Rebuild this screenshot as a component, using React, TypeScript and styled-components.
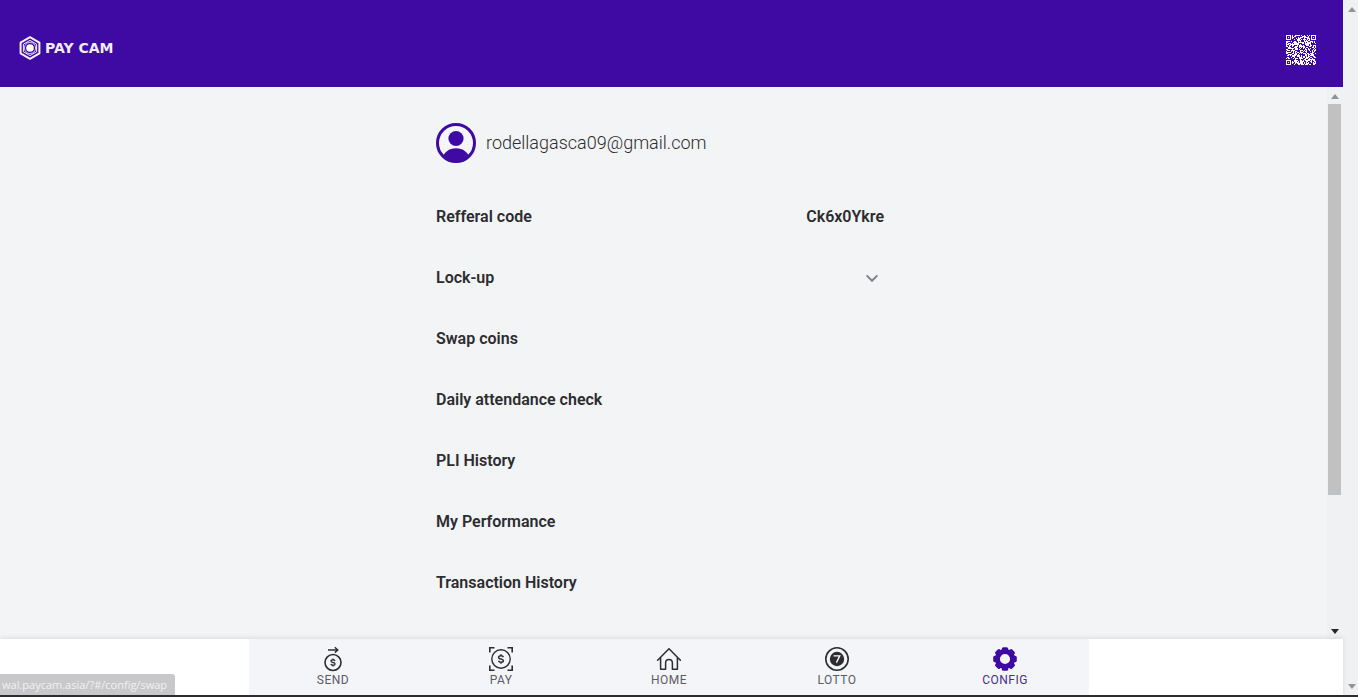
import React from "react";
import styled, { createGlobalStyle } from "styled-components";

const purple = "#3e0aa3";
const ink = "#2c2c31";

const GlobalStyle = createGlobalStyle`
  *, *::before, *::after { box-sizing: border-box; }
  body {
    margin: 0;
    background: #f3f4f6;
    color: ${ink};
    font-family: Roboto, "Liberation Sans", sans-serif;
  }
`;

const Window = styled.div`
  display: flex;
  height: 100vh;
  border-bottom: 2px solid #2e2c30;
  overflow: hidden;
`;

const Page = styled.div`
  display: flex;
  flex: 1;
  flex-direction: column;
  min-width: 0;
`;

const Header = styled.header`
  display: flex;
  flex: none;
  align-items: center;
  justify-content: space-between;
  height: 87px;
  padding: 8px 27px 0 18px;
  background: ${purple};
`;

const Logo = styled.a`
  display: flex;
  align-items: center;
  gap: 3px;
  color: #f1ecfb;
  font-family: "DejaVu Sans", sans-serif;
  font-size: 14px;
  font-weight: 700;
  line-height: 24px;
  text-decoration: none;
`;

const QrButton = styled.button`
  display: block;
  margin-top: 5px;
  padding: 0;
  border: 0;
  background: none;
  line-height: 0;
`;

const Body = styled.div`
  display: flex;
  flex: 1;
  min-height: 0;
`;

const Main = styled.main`
  flex: 1;
  min-width: 0;
  overflow: hidden;
`;

const Content = styled.div`
  max-width: 455px;
  margin: 0 auto;
  padding-top: 36px;
`;

const Account = styled.div`
  display: flex;
  align-items: center;
  gap: 10px;
  margin-bottom: 23px;
  font-size: 18px;
  font-weight: 300;
  line-height: 24px;
`;

const List = styled.ul`
  margin: 0;
  padding: 0;
  list-style: none;
`;

const Row = styled.li`
  display: flex;
  align-items: center;
  justify-content: space-between;
  height: 61px;
  padding-right: 7px;
  font-size: 16px;
  font-weight: 600;
  line-height: 24px;
`;

const RowLink = styled.a`
  color: inherit;
  text-decoration: none;
`;

const RowToggle = styled.button`
  display: flex;
  flex: 1;
  align-items: center;
  justify-content: space-between;
  padding: 0;
  border: 0;
  background: none;
  color: inherit;
  font: inherit;
`;

const Nav = styled.nav`
  position: relative;
  display: flex;
  flex: none;
  justify-content: center;
  height: 56px;
  padding-right: 5px;
  background: #fff;
  box-shadow: 0 -1px 5px rgba(0, 0, 0, 0.1);
`;

const Tabs = styled.div`
  display: flex;
  width: 100%;
  max-width: 840px;
  background: #f4f5f8;
`;

const Tab = styled.a<{ $active?: boolean }>`
  display: flex;
  flex: 1;
  flex-direction: column;
  align-items: center;
  padding-top: 7px;
  color: ${(p) => (p.$active ? purple : ink)};
  text-decoration: none;
`;

const TabLabel = styled.span<{ $active?: boolean }>`
  color: ${(p) => (p.$active ? "#45308c" : "#5c5b69")};
  font-size: 12px;
  letter-spacing: 0.5px;
  line-height: 16px;
`;

const Track = styled.div<{ $inner?: boolean }>`
  display: flex;
  flex: none;
  flex-direction: column;
  align-items: center;
  justify-content: space-between;
  width: ${(p) => (p.$inner ? 16 : 15)}px;
  padding: ${(p) => (p.$inner ? "7px 0 5px" : "7px 0 6px 3px")};
  background: #f0f1f3;
`;

const ThumbArea = styled.div`
  flex: 1;
  width: 13px;
  margin: 5px 2px 17px 0;
`;

const Thumb = styled.div`
  height: 77%;
  background: #c1c1c2;
`;

const Arrow = styled.span<{ $down?: boolean; $dark?: boolean }>`
  width: 8px;
  height: 5px;
  background: ${(p) => (p.$dark ? "#252528" : "#929295")};
  clip-path: ${(p) =>
    p.$down ? "polygon(0 0, 100% 0, 50% 100%)" : "polygon(50% 0, 100% 100%, 0 100%)"};
`;

const StatusBubble = styled.div`
  position: fixed;
  bottom: 2px;
  left: 0;
  height: 21px;
  padding: 0 8px 0 2px;
  border-top-right-radius: 3px;
  background: #c8c8ca;
  color: #f1f1f2;
  font-family: "Open Sans", sans-serif;
  font-size: 11px;
  line-height: 21px;
  white-space: nowrap;
`;

const QR_SIZE = 30;

function qrModules(): string {
  let seed = 20117;
  let d = "";
  for (let y = 0; y < QR_SIZE; y++) {
    for (let x = 0; x < QR_SIZE; x++) {
      seed = (seed * 1103515245 + 12345) % 2147483648;
      const nearTop = y < 6;
      const nearLeft = x < 6;
      const nearRight = x > QR_SIZE - 7;
      const nearBottom = y > QR_SIZE - 7;
      if ((nearTop && (nearLeft || nearRight)) || (nearBottom && nearLeft)) continue;
      if ((seed >> 12) % 100 < 56) d += `M${x} ${y}h1v1h-1z`;
    }
  }
  return d;
}

function QrCode() {
  return (
    <svg width="30" height="30" viewBox="0 0 30 30" fill="#fff" shapeRendering="crispEdges" aria-hidden="true">
      <path d={qrModules()} />
      {[[0, 0], [25, 0], [0, 25]].map(([x, y]) => (
        <g key={`${x}-${y}`}>
          <rect x={x + 0.5} y={y + 0.5} width="4" height="4" fill="none" stroke="#fff" />
          <rect x={x + 2} y={y + 2} width="1" height="1" />
        </g>
      ))}
    </svg>
  );
}

function HexMark() {
  return (
    <svg width="24" height="26" viewBox="0 0 24 26" fill="none" stroke="#f4f0fc" aria-hidden="true">
      <path d="M12 2.2 21.4 7.6V18.4L12 23.8 2.6 18.4V7.6Z" strokeWidth="2" strokeLinejoin="round" />
      <path d="M12 5.4 18.6 9.2V16.8L12 20.6 5.4 16.8V9.2Z" strokeWidth="1" />
      <circle cx="12" cy="13" r="5.6" strokeWidth="0.8" />
      <circle cx="12" cy="13" r="3.8" fill="#fff" stroke="none" />
    </svg>
  );
}

function Avatar() {
  return (
    <svg width="40" height="40" viewBox="0 0 40 40" aria-hidden="true">
      <defs>
        <clipPath id="avatar-clip">
          <circle cx="20" cy="20" r="19" />
        </clipPath>
      </defs>
      <circle cx="20" cy="20" r="18.5" fill="#f5f5fa" stroke={purple} strokeWidth="3" />
      <circle cx="20" cy="15.5" r="7.6" fill={purple} />
      <path d="M5 37C8 29 13 25.2 20 25.2S32 29 35 37L28 41H12Z" fill={purple} clipPath="url(#avatar-clip)" />
    </svg>
  );
}

function Chevron() {
  return (
    <svg width="24" height="24" viewBox="0 0 24 24" fill="none" stroke="#828288" strokeWidth="2" aria-hidden="true">
      <path d="M6.6 9.4 12 14.8 17.4 9.4" />
    </svg>
  );
}

function Dollar({ cx, cy, scale = 1 }: { cx: number; cy: number; scale?: number }) {
  return (
    <path
      transform={`translate(${cx} ${cy}) scale(${scale})`}
      d="M2.4-1.8C2.1-2.8 1.2-3.2 0-3.2-1.4-3.2-2.4-2.6-2.4-1.6-2.4-.5-1.4-.2 0 0 1.4.3 2.4.7 2.4 1.7 2.4 2.7 1.4 3.2 0 3.2-1.3 3.2-2.2 2.7-2.5 1.8M0-4.7V-3.2M0 3.2V4.7"
      strokeWidth="1.5"
    />
  );
}

function TabIcon({ children }: { children: React.ReactNode }) {
  return (
    <svg width="26" height="26" viewBox="0 0 26 26" fill="none" stroke="currentColor" strokeWidth="1.6" aria-hidden="true">
      {children}
    </svg>
  );
}

const tabs = [
  {
    label: "SEND",
    href: "#/send",
    icon: (
      <>
        <path d="M8 4H17.6M14.8 1.2 17.8 4 14.8 6.6" strokeWidth="1.4" />
        <circle cx="13" cy="16.5" r="8" />
        <Dollar cx={13} cy={16.5} scale={0.86} />
      </>
    ),
  },
  {
    label: "PAY",
    href: "#/pay",
    icon: (
      <>
        <path d="M1.8 6.5V1.8H6.5M19.5 1.8H24.2V6.5M24.2 19.5V24.2H19.5M6.5 24.2H1.8V19.5" />
        <circle cx="13" cy="13" r="9.2" strokeWidth="1.4" />
        <Dollar cx={13} cy={13} />
      </>
    ),
  },
  {
    label: "HOME",
    href: "#/home",
    icon: (
      <path
        d="M1.6 14.2 13 2.8 24.4 14.2M4.6 11.6V23.2H9.6V17.2C9.6 12.4 16.4 12.4 16.4 17.2V23.2H21.4V11.6"
        strokeWidth="1.5"
        strokeLinejoin="round"
        strokeLinecap="round"
      />
    ),
  },
  {
    label: "LOTTO",
    href: "#/lotto",
    icon: (
      <>
        <circle cx="13" cy="13" r="11.2" />
        <circle cx="13" cy="13" r="7.2" fill="currentColor" stroke="none" />
        <path d="M10.2 10.6V9.8H15.8L12.4 16.6" stroke="#fff" strokeWidth="1.3" />
      </>
    ),
  },
  {
    label: "CONFIG",
    href: "#/config",
    active: true,
    icon: (
      <>
        <circle cx="13" cy="13" r="7.6" strokeWidth="5" />
        {[0, 45, 90, 135, 180, 225, 270, 315].map((angle) => (
          <rect
            key={angle}
            x="9.8"
            y="1.2"
            width="6.4"
            height="5"
            rx="1.6"
            fill="currentColor"
            stroke="none"
            transform={`rotate(${angle} 13 13)`}
          />
        ))}
      </>
    ),
  },
];

const links = [
  { label: "Swap coins", href: "#/config/swap" },
  { label: "Daily attendance check", href: "#/config/attendance" },
  { label: "PLI History", href: "#/config/pli" },
  { label: "My Performance", href: "#/config/performance" },
  { label: "Transaction History", href: "#/config/transactions" },
];

export default function App() {
  return (
    <>
      <GlobalStyle />
      <Window>
        <Page>
          <Header>
            <Logo href="#/home">
              <HexMark />
              PAY CAM
            </Logo>
            <QrButton type="button" aria-label="QR code">
              <QrCode />
            </QrButton>
          </Header>
          <Body>
            <Main>
              <Content>
                <Account>
                  <Avatar />
                  <span>rodellagasca09@gmail.com</span>
                </Account>
                <List>
                  <Row>
                    <span>Refferal code</span>
                    <span>Ck6x0Ykre</span>
                  </Row>
                  <Row>
                    <RowToggle type="button" aria-expanded="false">
                      Lock-up
                      <Chevron />
                    </RowToggle>
                  </Row>
                  {links.map((link) => (
                    <Row key={link.label}>
                      <RowLink href={link.href}>{link.label}</RowLink>
                    </Row>
                  ))}
                </List>
              </Content>
            </Main>
            <Track $inner>
              <Arrow />
              <ThumbArea>
                <Thumb />
              </ThumbArea>
              <Arrow $down $dark />
            </Track>
          </Body>
          <Nav>
            <Tabs>
              {tabs.map((tab) => (
                <Tab key={tab.label} href={tab.href} $active={tab.active}>
                  <TabIcon>{tab.icon}</TabIcon>
                  <TabLabel $active={tab.active}>{tab.label}</TabLabel>
                </Tab>
              ))}
            </Tabs>
          </Nav>
        </Page>
        <Track>
          <Arrow />
          <Arrow $down />
        </Track>
      </Window>
      <StatusBubble>wal.paycam.asia/?#/config/swap</StatusBubble>
    </>
  );
}
